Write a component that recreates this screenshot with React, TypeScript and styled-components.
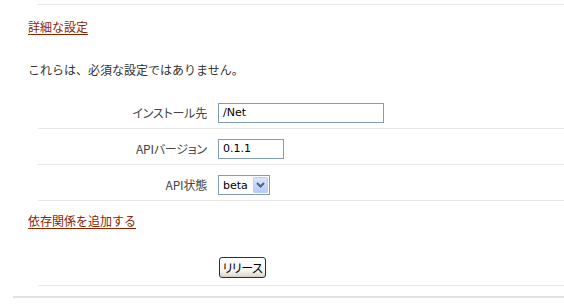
import styled, { createGlobalStyle } from "styled-components";

const GlobalStyle = createGlobalStyle`
  body {
    margin: 0;
    background: #ffffff;
    font-family: "Noto Sans CJK JP", "Liberation Sans", sans-serif;
    font-size: 12px;
    color: #333333;
  }
`;

const Page = styled.div`
  width: 564px;
  height: 304px;
  overflow: hidden;
`;

const Rule = styled.div<{ $left: number; $top?: number; $weight?: number; $color?: string }>`
  margin-left: ${(p) => p.$left}px;
  margin-top: ${(p) => p.$top ?? 0}px;
  border-top: ${(p) => p.$weight ?? 1}px solid ${(p) => p.$color ?? "#e8e8e8"};
`;

const Section = styled.div`
  padding-left: 28px;
`;

const LinkLine = styled.div<{ $top: number }>`
  margin-top: ${(p) => p.$top}px;
  line-height: 16px;

  a {
    color: #8c2400;
    text-decoration: underline;
    text-underline-offset: 2px;
  }
`;

const Note = styled.p`
  margin: 27px 0 0;
  line-height: 16px;
  color: #333333;
`;

const Form = styled.div`
  margin-top: 15px;
  margin-left: 38px;
`;

const Row = styled.div`
  display: flex;
  align-items: flex-start;
  height: 36px;
  box-sizing: border-box;
  padding-top: 10px;
  border-bottom: 1px solid #e8e8e8;
`;

const Label = styled.div`
  width: 180px;
  box-sizing: border-box;
  padding-right: 11px;
  text-align: right;
  line-height: 20px;
  color: #444444;
  font-feature-settings: "palt";
  letter-spacing: -0.2px;
`;

const TextBox = styled.div<{ $width: number }>`
  width: ${(p) => p.$width}px;
  height: 20px;
  box-sizing: border-box;
  border: 1px solid #7f9db9;
  padding: 0 4px;
  font-family: "DejaVu Sans", Verdana, sans-serif;
  font-size: 11px;
  line-height: 18px;
  color: #000000;
  background: #ffffff;
`;

const SelectBox = styled.div`
  display: flex;
  align-items: center;
  justify-content: space-between;
  width: 52px;
  height: 20px;
  box-sizing: border-box;
  border: 1px solid #7f9db9;
  padding: 0 1px 0 4px;
  font-family: "DejaVu Sans", Verdana, sans-serif;
  font-size: 11px;
  color: #000000;
`;

const Arrow = styled.span`
  display: flex;
  align-items: center;
  justify-content: center;
  width: 15px;
  height: 16px;
  box-sizing: border-box;
  border: 1px solid #b9cdf6;
  border-radius: 1px;
  background: linear-gradient(#dbe6fd, #b6cbf8);
`;

const ButtonRow = styled.div`
  margin-left: 38px;
  height: 57px;
  box-sizing: border-box;
  border-bottom: 1px solid #e8e8e8;
  padding: 28px 0 0 181px;
`;

const Button = styled.button`
  width: 47px;
  height: 21px;
  padding: 0;
  border: 1px solid #003c74;
  border-radius: 3px;
  background: linear-gradient(#ffffff, #f3f2ec 70%, #d8d5c8);
  font-family: "Noto Sans CJK JP", sans-serif;
  font-size: 12px;
  line-height: 18px;
  color: #000000;
  white-space: nowrap;
  font-feature-settings: "palt";
  letter-spacing: -0.5px;
  box-shadow: inset 0 -1px 0 #d6d0c0;
`;

export default function App() {
  return (
    <>
      <GlobalStyle />
      <Page>
        <Rule $left={38} $top={4} />
        <Section>
          <LinkLine $top={14}>
            <a>詳細な設定</a>
          </LinkLine>
          <Note>これらは、必須な設定ではありません。</Note>
        </Section>
        <Form>
          <Row>
            <Label>インストール先</Label>
            <TextBox $width={166}>/Net</TextBox>
          </Row>
          <Row>
            <Label>APIバージョン</Label>
            <TextBox $width={66}>0.1.1</TextBox>
          </Row>
          <Row>
            <Label>API状態</Label>
            <SelectBox>
              <span>beta</span>
              <Arrow>
                <svg width="9" height="6" viewBox="0 0 9 6">
                  <path d="M1 1 L4.5 4.5 L8 1" fill="none" stroke="#4d6185" strokeWidth="2" />
                </svg>
              </Arrow>
            </SelectBox>
          </Row>
        </Form>
        <Section>
          <LinkLine $top={12}>
            <a>依存関係を追加する</a>
          </LinkLine>
        </Section>
        <ButtonRow>
          <Button>リリース</Button>
        </ButtonRow>
        <Rule $left={13} $top={10} $weight={2} $color="#e2e2e2" />
      </Page>
    </>
  );
}
